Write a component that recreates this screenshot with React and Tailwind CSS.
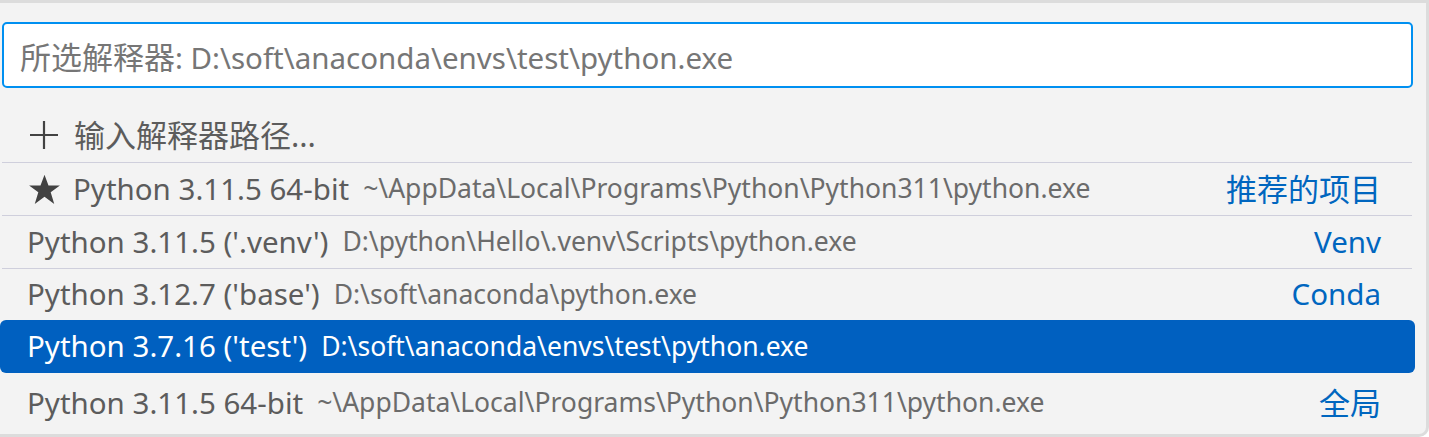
import React from "react";

const font = { fontFamily: '"Noto Sans", "Noto Sans CJK SC", sans-serif' };

function Row({ icon, label, desc, tag, selected, border, h, cjk }) {
  return (
    <div
      className={
        "flex items-center " +
        (selected
          ? "bg-[#0060c0] rounded-[6px] ml-[0px] w-[1415px] text-white"
          : "ml-[2px] w-[1410px]") +
        (border ? " border-b border-[#cfcfdc]" : "")
      }
      style={{ height: h }}
    >
      <div className={"flex items-center flex-1 min-w-0 " + (selected ? "pl-[27px]" : "pl-[25px]")}>
        {icon}
        <span className={(cjk ? "text-[31px]" : "text-[29.5px]") + " whitespace-nowrap " + (selected ? "text-white" : "text-[#5c5c5c]")}>{label}</span>
        {desc && (
          <span className={"text-[26.5px] whitespace-nowrap ml-[14px] " + (selected ? "text-white" : "text-[#6b6b6b]")}>{desc}</span>
        )}
      </div>
      {tag && <span className={(cjk === undefined && /[\u4e00-\u9fff]/.test(tag) ? "text-[31px]" : "text-[29.5px]") + " text-[#0066bf] pr-[31px] whitespace-nowrap"}>{tag}</span>}
    </div>
  );
}

export default function App() {
  return (
    <div style={font} className="w-[1429px] h-[437px] bg-[#f3f3f3] border-t-[3px] border-r-[3px] border-b-[3px] border-[#dcdcdc] rounded-br-[10px] overflow-hidden">
      <div className="mt-[19px] ml-[2px] w-[1411px] h-[66px] bg-white border-2 border-[#0090f1] rounded-[5px] flex items-center pl-[16px] pt-[5px]">
        <span className="text-[29.5px] text-[#767676] whitespace-nowrap">
          <span className="text-[31px]">所选解释器</span>: D:\soft\anaconda\envs\test\python.exe
        </span>
      </div>
      <div className="mt-[20px]">
        <Row
          h={55}
          border
          cjk
          icon={
            <svg width="32" height="32" viewBox="0 0 32 32" className="mr-[14px] ml-[1px]">
              <path d="M16 2 V30 M2 16 H30" stroke="#424242" strokeWidth="2.2" fill="none" />
            </svg>
          }
          label="输入解释器路径..."
        />
        <Row
          h={53}
          border
          icon={
            <svg width="35" height="33" viewBox="0 0 24 24" className="mr-[11px]">
              <path d="M12 1.2 L14.9 9.1 L23.2 9.1 L16.5 14 L19.1 22.5 L12 17.3 L4.9 22.5 L7.5 14 L0.8 9.1 L9.1 9.1 Z" fill="#424242" />
            </svg>
          }
          label="Python 3.11.5 64-bit"
          desc="~\AppData\Local\Programs\Python\Python311\python.exe"
          tag="推荐的项目"
        />
        <Row h={53} border label="Python 3.11.5 ('.venv')" desc="D:\python\Hello\.venv\Scripts\python.exe" tag="Venv" />
        <Row h={51} label="Python 3.12.7 ('base')" desc="D:\soft\anaconda\python.exe" tag="Conda" />
        <Row h={53} selected label="Python 3.7.16 ('test')" desc="D:\soft\anaconda\envs\test\python.exe" />
        <Row h={60} label="Python 3.11.5 64-bit" desc="~\AppData\Local\Programs\Python\Python311\python.exe" tag="全局" />
      </div>
    </div>
  );
}
